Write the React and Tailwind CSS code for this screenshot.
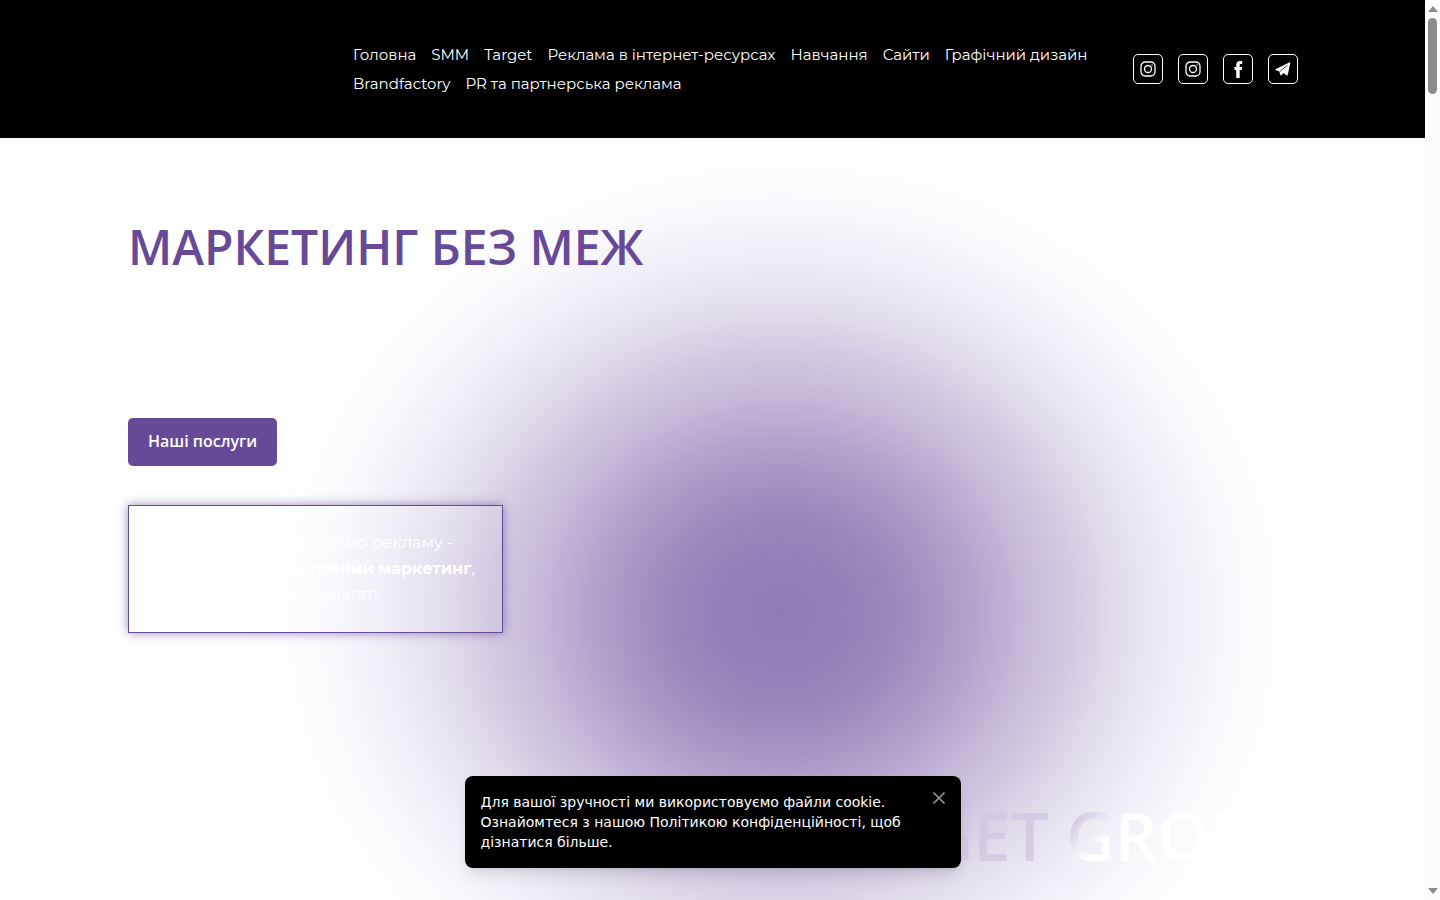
const NAV = [
  'Головна', 'SMM', 'Target', 'Реклама в інтернет-ресурсах', 'Навчання',
  'Сайти', 'Графічний дизайн', 'Brandfactory', 'PR та партнерська реклама',
];

function Instagram() {
  return (
    <svg viewBox="0 0 16 16" className="size-4" fill="none" stroke="currentColor" strokeWidth="1.3">
      <rect x="1" y="1" width="14" height="14" rx="4.2" />
      <circle cx="8" cy="8" r="3.5" />
      <circle cx="12" cy="4" r="0.7" fill="currentColor" stroke="none" />
    </svg>
  );
}

function Facebook() {
  return (
    <svg viewBox="0 0 9 17" className="h-[17px] w-[9px]" fill="currentColor">
      <path d="M2.200 17V9H.4V5.900h1.800V4.200C2.200 1.500 3.600 0 6 0c1 0 1.900.1 2.200.1v2.900H6.900c-1 0-1.200.5-1.200 1.300v1.600h2.500L7.800 9H5.700v8z" />
    </svg>
  );
}

function Telegram() {
  return (
    <svg viewBox="0 0 16 14" className="h-3.5 w-4" fill="currentColor">
      <path d="M15.300.8 12.900 12.600c-.2.8-.7 1-1.400.6L8.300 10.900 6.400 13.200c-.3.4-.8.300-1-.1L4.300 9.300.9 8.200c-.8-.3-.8-.8.1-1.200L14.200.5c.7-.2 1.200-.1 1.100.3z" />
      <path d="M5 9.400 12.600 3.200" stroke="#000" strokeWidth="0.7" fill="none" />
    </svg>
  );
}

const SOCIALS = [
  { label: 'Instagram', Icon: Instagram },
  { label: 'Instagram навчання', Icon: Instagram },
  { label: 'Facebook', Icon: Facebook },
  { label: 'Telegram', Icon: Telegram },
];

function Header() {
  return (
    <header className="bg-black py-10 pr-[127px] pl-32 text-white">
      <div className="flex items-center">
        <div className="w-[225px] shrink-0" />
        <nav className="flex-1">
          <ul className="flex flex-wrap gap-x-[15px]">
            {NAV.map((item) => (
              <li key={item}>
                <a href="#" className="block text-[15px] leading-[29px]">{item}</a>
              </li>
            ))}
          </ul>
        </nav>
        <ul className="flex shrink-0 gap-[15px] pl-[30px]">
          {SOCIALS.map(({ label, Icon }) => (
            <li key={label}>
              <a href="#" aria-label={label} className="flex size-[30px] items-center justify-center rounded-[5px] border border-white">
                <Icon />
              </a>
            </li>
          ))}
        </ul>
      </div>
    </header>
  );
}

function CookieNotice() {
  return (
    <div role="dialog" aria-label="Cookie" className="absolute bottom-8 left-1/2 flex w-[496px] -translate-x-1/2 items-start justify-between rounded-lg bg-black p-4 font-['DejaVu_Sans',sans-serif] text-sm text-white shadow-lg">
      <p className="w-[430px]">
        Для вашої зручності ми використовуємо файли cookie. Ознайомтеся з нашою{' '}
        <a href="#">Політикою конфіденційності</a>, щоб дізнатися більше.
      </p>
      <button type="button" aria-label="Закрити" className="text-[#8c8c8c]">
        <svg viewBox="0 0 12 12" className="size-3" stroke="currentColor" strokeWidth="1.6">
          <path d="M.5.5l11 11M11.500.5l-11 11" />
        </svg>
      </button>
    </div>
  );
}

function Scrollbar() {
  return (
    <div aria-hidden="true" className="flex w-[15px] shrink-0 flex-col items-center justify-between bg-[#fcfcfc] text-[#8b8b8b]">
      <div className="flex flex-col items-center gap-1.5 pt-1.5">
        <svg viewBox="0 0 10 6" className="h-1.5 w-2.5" fill="currentColor"><path d="M5 0l5 6H0z" /></svg>
        <div className="h-[76px] w-[9px] rounded-full bg-[#8b8b8b]" />
      </div>
      <svg viewBox="0 0 10 6" className="mb-1.5 h-1.5 w-2.5" fill="currentColor"><path d="M0 0h10L5 6z" /></svg>
    </div>
  );
}

export default function App() {
  return (
    <div className="flex min-h-screen bg-white font-['Montserrat',sans-serif]">
      <div className="relative flex min-w-0 flex-1 flex-col">
        <Header />
        <main className="flex flex-1 flex-col items-start bg-[radial-gradient(540px_490px_at_782px_476px,#907cb4_0%,#937fb7_9%,#9a86bc_19%,#a490c2_26%,#b6a3cd_36%,#c5b9d9_45%,#d3cae2_54%,#e3deec_63%,#f0edf6_73%,#f9f8fc_83%,#fdfdfe_92%,#ffffff_100%)] px-32 pt-20">
          <h1 className="font-['Open_Sans',sans-serif] text-5xl leading-[58px] font-semibold text-[#664a98]">
            МАРКЕТИНГ БЕЗ МЕЖ
          </h1>
          <button type="button" className="mt-[142px] h-12 rounded-[5px] bg-[#664a98] px-5 pb-0.5 font-['Open_Sans',sans-serif] text-base font-semibold text-white">
            Наші послуги
          </button>
          <p className="mt-[39px] w-[375px] border border-[#664a98] p-6 text-base leading-[26px] text-white shadow-[0_0_10px_#664a98a0]">
            Ми не просто запускаємо рекламу -<br />
            ми створюємо <b>системний маркетинг</b>,<br />
            який приносить результат!
          </p>
          <div className="mt-auto -mr-1 self-end bg-[linear-gradient(135deg,#c8bedd_0%,#d6cee6_50%,#ffffff_58%)] bg-clip-text pb-6 font-['Open_Sans',sans-serif] text-[67px] leading-[82px] font-semibold text-transparent">
            TARGET GROUP
          </div>
        </main>
        <CookieNotice />
      </div>
      <Scrollbar />
    </div>
  );
}
